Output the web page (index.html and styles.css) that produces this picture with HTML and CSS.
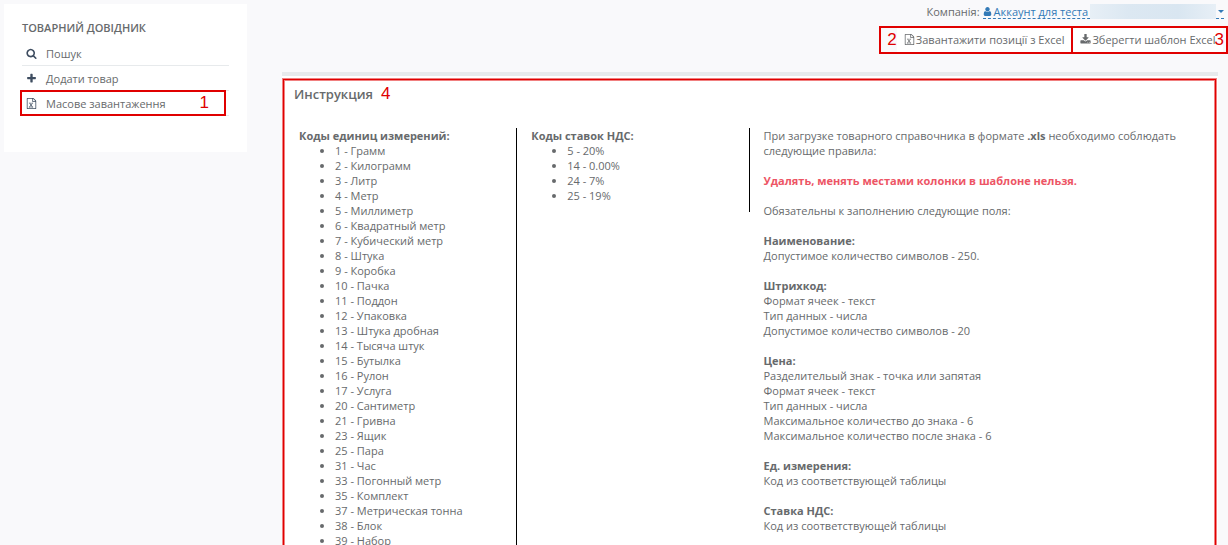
FILE: index.html
```html
<!DOCTYPE html>
<html lang="uk">
<head>
<meta charset="utf-8">
<title>Товарний довідник</title>
<link rel="stylesheet" href="styles.css">
</head>
<body>
<svg class="sprite" aria-hidden="true">
  <symbol id="excel" viewBox="0 0 1792 1792"><path fill-rule="evenodd" d="M1596 380q28 28 48 76t20 88v1152q0 40-28 68t-68 28H224q-40 0-68-28t-28-68V96q0-40 28-68t68-28h896q40 0 88 20t76 48zM1152 136v376h376q-10-29-22-41l-313-313q-12-12-41-22zM1536 1664V640h-416q-40 0-68-28t-28-68V128H256v1536zM470 1430v106h281v-106h-75l103-161 32-56h2q2 8 5 12l20 44 107 161h-76v106h291v-106h-68l-192-273 195-282h67V768H883v107h74l-103 159q-4 7-32 53h-2l-24-53-99-159h76V768H482v107h68l189 272-200 283z"/></symbol>
</svg>
<div class="page">
  <aside class="sidebar">
    <h2 class="sidebar-title">ТОВАРНИЙ ДОВІДНИК</h2>
    <nav class="menu">
      <a class="menu-item" href="#search"><svg class="icon dark" viewBox="0 0 1792 1792"><path d="M1216 832q0-185-131.500-316.500t-316.500-131.500-316.500 131.500-131.500 316.500 131.500 316.500 316.500 131.500 316.500-131.500 131.500-316.500zm512 832q0 52-38 90t-90 38q-54 0-90-38l-343-342q-179 124-399 124-143 0-273.500-55.500t-225-150-150-225-55.500-273.500 55.500-273.500 150-225 225-150 273.500-55.500 273.500 55.500 225 150 150 225 55.500 273.500q0 220-124 399l343 343q37 37 37 90z"/></svg>Пошук</a>
      <a class="menu-item" href="#add"><svg class="icon dark" viewBox="0 0 1792 1792"><path d="M1600 736v192q0 40-28 68t-68 28h-416v416q0 40-28 68t-68 28h-192q-40 0-68-28t-28-68v-416h-416q-40 0-68-28t-28-68v-192q0-40 28-68t68-28h416v-416q0-40 28-68t68-28h192q40 0 68 28t28 68v416h416q40 0 68 28t28 68z"/></svg>Додати товар</a>
      <a class="menu-item" href="#bulk"><svg class="icon dark"><use href="#excel"/></svg>Масове завантаження<span class="mark mark-menu">1</span></a>
    </nav>
  </aside>

  <div class="content">
    <header class="company">
      <span>Компанія:</span>
      <a class="account" href="#account"><svg class="icon user" viewBox="128 0 1536 1792"><path d="M1536 1399q0 109-62.500 187t-150.500 78h-854q-88 0-150.500-78t-62.500-187q0-85 8.500-160.500t31.500-152 58.500-131 94-89 134.500-34.500q131 128 313 128t313-128q76 0 134.500 34.500t94 89 58.500 131 31.500 152 8.500 160.500zm-256-887q0 159-112.500 271.500t-271.500 112.500-271.500-112.500-112.500-271.500 112.500-271.500 271.500-112.500 271.500 112.500 112.500 271.500z"/></svg>Аккаунт для теста<span class="hidden-name"></span><span class="caret"></span></a>
    </header>
    <div class="actions">
      <div class="action-box first"><span class="number">2</span><button class="btn" type="button"><svg class="icon"><use href="#excel"/></svg>Завантажити позиції з Excel</button></div>
      <div class="action-box second"><button class="btn" type="button"><svg class="icon" viewBox="0 0 1792 1792"><path d="M1344 1344q0-26-19-45t-45-19-45 19-19 45 19 45 45 19 45-19 19-45zm256 0q0-26-19-45t-45-19-45 19-19 45 19 45 45 19 45-19 19-45zm128-224v320q0 40-28 68t-68 28h-1472q-40 0-68-28t-28-68v-320q0-40 28-68t68-28h465l135 136q58 56 136 56t136-56l136-136h464q40 0 68 28t28 68zm-325-569q17 41-14 70l-448 448q-18 19-45 19t-45-19l-448-448q-31-29-14-70 17-39 59-39h256v-448q0-26 19-45t45-19h256q26 0 45 19t19 45v448h256q42 0 59 39z"/></svg>Зберегти шаблон Excel</button><span class="number">3</span></div>
    </div>

    <main class="panel">
      <div class="frame">
        <h1 class="panel-title">Инструкция<span class="number">4</span></h1>
        <div class="columns">
          <section class="column lined">
            <b>Коды единиц измерений:</b>
            <ul class="codes">
              <li>1 - Грамм</li><li>2 - Килограмм</li><li>3 - Литр</li><li>4 - Метр</li><li>5 - Миллиметр</li><li>6 - Квадратный метр</li><li>7 - Кубический метр</li><li>8 - Штука</li><li>9 - Коробка</li><li>10 - Пачка</li><li>11 - Поддон</li><li>12 - Упаковка</li><li>13 - Штука дробная</li><li>14 - Тысяча штук</li><li>15 - Бутылка</li><li>16 - Рулон</li><li>17 - Услуга</li><li>20 - Сантиметр</li><li>21 - Гривна</li><li>23 - Ящик</li><li>25 - Пара</li><li>31 - Час</li><li>33 - Погонный метр</li><li>35 - Комплект</li><li>37 - Метрическая тонна</li><li>38 - Блок</li><li>39 - Набор</li>
            </ul>
          </section>
          <section class="column lined">
            <b>Коды ставок НДС:</b>
            <ul class="codes"><li>5 - 20%</li><li>14 - 0.00%</li><li>24 - 7%</li><li>25 - 19%</li></ul>
          </section>
          <section class="column rules">
            <p>При загрузке товарного справочника в формате <b>.xls</b> необходимо соблюдать следующие правила:</p>
            <p class="warning">Удалять, менять местами колонки в шаблоне нельзя.</p>
            <p>Обязательны к заполнению следующие поля:</p>
            <p><b>Наименование:</b><br>Допустимое количество символов - 250.</p>
            <p><b>Штрихкод:</b><br>Формат ячеек - текст<br>Тип данных - числа<br>Допустимое количество символов - 20</p>
            <p><b>Цена:</b><br>Разделительый знак - точка или запятая<br>Формат ячеек - текст<br>Тип данных - числа<br>Максимальное количество до знака - 6<br>Максимальное количество после знака - 6</p>
            <p><b>Ед. измерения:</b><br>Код из соответствующей таблицы</p>
            <p><b>Ставка НДС:</b><br>Код из соответствующей таблицы</p>
          </section>
        </div>
      </div>
    </main>
  </div>
</div>
</body>
</html>
```
FILE: styles.css
```css
* { box-sizing: border-box; }

body {
  margin: 0;
  height: 100vh;
  overflow: hidden;
  background: #f9f9fb;
  color: #676a6c;
  font: 11px/15px "Open Sans", "Noto Sans", sans-serif;
}

a { color: inherit; text-decoration: none; }
.sprite { display: none; }
.icon { width: 11px; height: 11px; flex: none; fill: currentColor; }
.icon.dark { color: #3e4d60; }
.icon.user { width: 9px; }

.page { display: flex; align-items: flex-start; min-height: 100vh; }

.sidebar {
  flex: none;
  width: 243px;
  min-height: 148px;
  margin: 4px 0 0 4px;
  padding: 16px 18px;
  background: #fff;
}
.sidebar-title { margin: 0 0 5px; font-size: 11px; line-height: 16px; font-weight: 600; }
.menu-item {
  position: relative;
  display: flex;
  align-items: center;
  gap: 9px;
  height: 25px;
  padding-left: 4px;
  border-bottom: 1px solid #e7eaec;
}
.mark {
  position: absolute;
  inset: -1px 3px -1px -2px;
  padding-right: 15px;
  border: 2px solid #e00000;
  text-align: right;
  font: 17px/22px "Liberation Sans", sans-serif;
  color: #e00000;
}
.number { font: 17px/20px "Liberation Sans", sans-serif; color: #e00000; }

.content { flex: 1; min-width: 0; padding-left: 35px; }
.company { display: flex; justify-content: flex-end; gap: 3px; height: 26px; padding: 4px 4px 0 0; }
.account {
  display: flex;
  align-items: center;
  gap: 2px;
  height: 15px;
  border-bottom: 1px dashed #337ab7;
  color: #337ab7;
}
.hidden-name {
  width: 126px;
  height: 15px;
  background: linear-gradient(90deg, #e7eff6, #dce8f2 30%, #d9e6f1 70%, #e7eff6);
}
.caret { border: 3px solid transparent; border-top-color: #337ab7; border-bottom: 0; }

.actions { display: flex; justify-content: flex-end; height: 46px; }
.action-box { display: flex; align-items: center; height: 28px; border: 2px solid #e00000; }
.action-box.first { padding-left: 6px; }
.action-box.second { margin-left: -2px; }
.action-box.second .number { margin-left: -8px; padding-right: 2px; }
.btn {
  display: flex;
  align-items: center;
  gap: 1px;
  height: 24px;
  padding: 0 7px 2px;
  border: 0;
  background: #fff;
  color: inherit;
  font: inherit;
}

.panel { margin-right: 10px; padding: 3px 2px 0 1px; border-top: 4px solid #e7eaec; background: #fff; }
.frame {
  min-height: 100vh;
  padding: 4px 0;
  border: 1px solid #e00000;
  box-shadow: 0 0 0 1px #f08080, inset 0 0 0 1px #f08080;
}
.panel-title { display: flex; align-items: center; gap: 8px; margin: 0 0 24px; padding-left: 10px; font-size: 13px; line-height: 20px; font-weight: 600; }
.columns { display: grid; grid-template-columns: 1fr 1fr 2fr; align-items: start; padding: 0 1px; }
.column { padding: 0 14px; }
.lined { border-right: 1px solid #000; }
.codes { margin: 0 0 9px; padding-left: 36px; }
.rules p { margin: 0 0 15px; }
.warning { color: #ed5565; font-weight: 700; }
```
